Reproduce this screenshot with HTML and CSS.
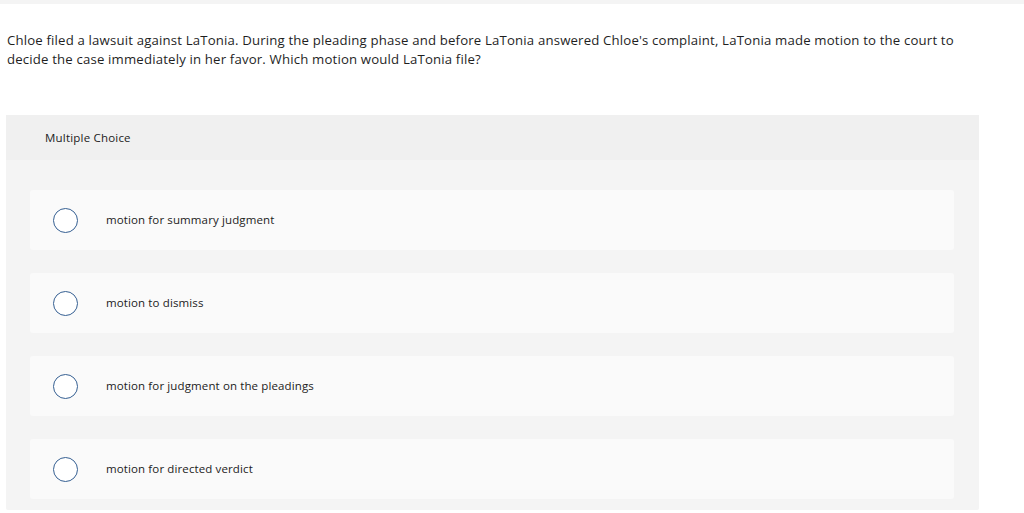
FILE: index.html
```html
<!DOCTYPE html>
<html>
<head>
<meta charset="utf-8">
<link rel="stylesheet" href="styles.css">
</head>
<body>
<div class="topbar"></div>
<div class="page">
  <p class="question">Chloe filed a lawsuit against LaTonia. During the pleading phase and before LaTonia answered Chloe's complaint, LaTonia made motion to the court to decide the case immediately in her favor. Which motion would LaTonia file?</p>
  <div class="panel">
    <div class="panel-head">Multiple Choice</div>
    <div class="panel-body">
      <div class="option"><span class="radio"></span><span class="label">motion for summary judgment</span></div>
      <div class="option"><span class="radio"></span><span class="label">motion to dismiss</span></div>
      <div class="option"><span class="radio"></span><span class="label">motion for judgment on the pleadings</span></div>
      <div class="option"><span class="radio"></span><span class="label">motion for directed verdict</span></div>
    </div>
  </div>
</div>
</body>
</html>
```

FILE: styles.css
```css
html, body {
  margin: 0;
  padding: 0;
  background: #fff;
}
body {
  font-family: "Open Sans", "Lato", sans-serif;
  color: #222;
}
.topbar {
  height: 4px;
  background: #f4f4f4;
}
.page {
  padding: 27px 45px 0 6px;
}
.question {
  margin: 0 0 0 1px;
  font-size: 13.2px;
  line-height: 19px;
  letter-spacing: 0.17px;
  color: #1f1f1f;
}
.panel {
  margin-top: 46px;
  width: 973px;
  background: #f4f4f4;
  border-radius: 2px;
}
.panel-head {
  height: 45px;
  background: #f0f0f0;
  display: flex;
  align-items: center;
  padding-left: 39px;
  font-size: 11.5px;
  letter-spacing: 0.2px;
  color: #222;
}
.panel-body {
  padding: 30px 25px 11px 24px;
  display: flex;
  flex-direction: column;
  gap: 23px;
}
.option {
  height: 60px;
  background: #fafafa;
  border-radius: 3px;
  display: flex;
  align-items: center;
  padding-left: 23px;
}
.radio {
  width: 23px;
  height: 23px;
  border: 1.2px solid #355f92;
  border-radius: 50%;
  background: #fff;
  flex: none;
}
.label {
  margin-left: 28px;
  font-size: 11.5px;
  letter-spacing: 0.12px;
  color: #222;
  position: relative;
  top: -1px;
}
```
